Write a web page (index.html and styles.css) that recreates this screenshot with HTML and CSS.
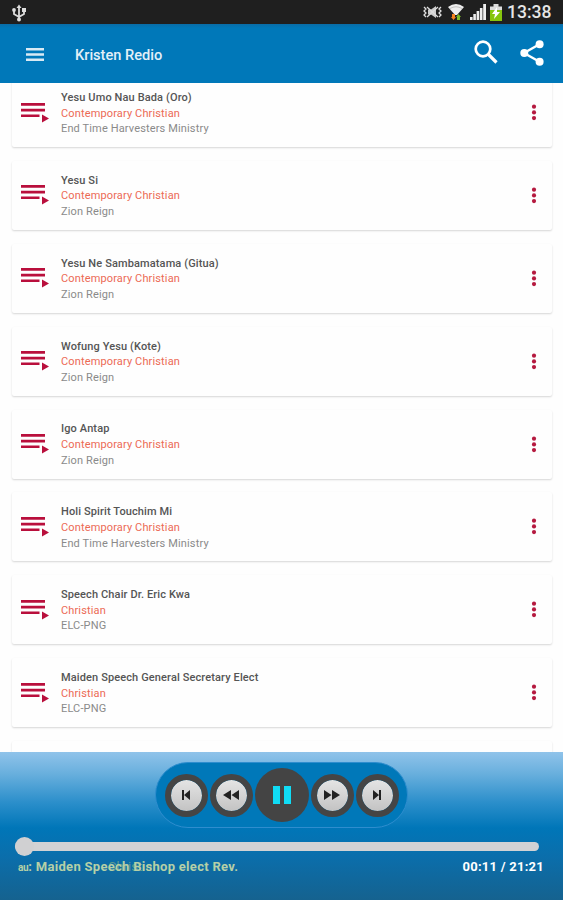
FILE: index.html
```
<!DOCTYPE html>
<html lang="en">

<head>
	<meta charset="utf-8">
	<title>Kristen Redio</title>
	<meta name="viewport" content="width=device-width, initial-scale=1.0">
	<link rel="stylesheet" href="styles.css">
</head>

<body>
	<div class="status-bar">
		<svg class="usb" width="14" height="18" viewBox="0 0 14 18" fill="none" stroke="#ddd" stroke-width="1.8">
			<path d="M7 2v14M2 7v3l5 3 5-3V6" />
			<path d="M4.500 4L7 .5 9.500 4z" fill="#ddd" stroke="none" />
			<circle cx="2" cy="6" r="1.900" fill="#ddd" stroke="none" />
			<path d="M10 4h4v4h-4z" fill="#ddd" stroke="none" />
			<circle cx="7" cy="15.500" r="2" fill="#ddd" stroke="none" />
		</svg>
		<div class="status-icons">
			<svg width="19" height="14" viewBox="0 0 19 14" fill="none" stroke="#ddd" stroke-width="1.300">
				<path d="M1 2l2 2-2 2 2 2-2 2 2 2M18 2l-2 2 2 2-2 2 2 2-2 2" />
				<path d="M5 4.500h3L13 1v12L8 9.500H5z" fill="#ccc" stroke="none" />
				<path d="M4 2l11 10M4 12L15 2" />
			</svg>
			<svg width="16" height="18" viewBox="0 0 16 18">
				<path d="M0 4Q8-2 16 4L9 12H7z" fill="#eee" />
				<path d="M2 5.500Q8 2 14 5.500" fill="none" stroke="#aaa" stroke-width=".7" />
				<path d="M4 11h3v3h1l-2.500 3L3 14h1z" fill="#f5821f" />
				<path d="M9 17h3v-3h1l-2.500-3L8 14h1z" fill="#7dbb25" />
			</svg>
			<svg width="16" height="16" viewBox="0 0 16 16" fill="#eee">
				<path d="M0 13h2.600v3H0zM3.300 10h2.600v6H3.300zM6.600 7h2.600v9H6.600zM9.900 4h2.600v12H9.900zM13.200 0H16v16h-2.800z" />
			</svg>
			<svg width="12" height="17" viewBox="0 0 12 17">
				<path d="M3.500 0h5v2.500H12V17H0V2.500h3.500z" fill="#ddd" />
				<path d="M0 6h12v11H0z" fill="#86c50d" />
				<path d="M7 3L2 10h3l-1 5 6-7H7z" fill="#fff" />
			</svg>
			<span class="clock">13:38</span>
		</div>
	</div>

	<div class="toolbar">
		<svg class="menu" width="18" height="13" viewBox="0 0 18 13" fill="#fff">
			<path d="M0 0h18v2.600H0zM0 5.200h18v2.600H0zM0 10.400h18V13H0z" />
		</svg>
		<h1>Kristen Redio</h1>
		<svg class="search" width="24" height="24" viewBox="0 0 24 24" fill="none" stroke="#fff" stroke-width="2.700">
			<circle cx="9" cy="9" r="7.300" />
			<path d="M14 14l8.500 8.500" stroke-width="3.200" />
		</svg>
		<svg class="share" width="24" height="26" viewBox="0 0 24 26" fill="#fff">
			<path d="M19.500 4.300L4 13l15.500 8.700" fill="none" stroke="#fff" stroke-width="2.400" />
			<circle cx="19.600" cy="4.300" r="4" />
			<circle cx="4.300" cy="13" r="4" />
			<circle cx="19.600" cy="21.700" r="4" />
		</svg>
	</div>

	<div id="tracks" class="tracks"></div>

	<div class="player">
		<div class="controls">
			<button class="btn" aria-label="Previous">
				<svg width="10" height="10" viewBox="0 0 10 10"><path d="M1 0h2v10H1zM9 0v10L3 5z" /></svg>
			</button>
			<button class="btn" aria-label="Rewind">
				<svg width="16" height="10" viewBox="0 0 16 10"><path d="M8 0v10L0 5zM16 0v10L8.500 5z" /></svg>
			</button>
			<button class="btn-pause" aria-label="Pause">
				<svg width="18" height="18" viewBox="0 0 18 18" fill="#10dcf5"><path d="M0 0h7v18H0zM11 0h7v18h-7z" /></svg>
			</button>
			<button class="btn" aria-label="Forward">
				<svg width="16" height="10" viewBox="0 0 16 10"><path d="M0 0v10l7.500-5zM8 0v10l8-5z" /></svg>
			</button>
			<button class="btn" aria-label="Next">
				<svg width="10" height="10" viewBox="0 0 10 10"><path d="M7 0h2v10H7zM1 0v10l6-5z" /></svg>
			</button>
		</div>
		<div class="seek">
			<div class="thumb"></div>
		</div>
		<div class="info">
			<div class="now">
				<span class="now-tag">Christian</span>
				<span class="now-lead">au</span><span class="now-title">: Maiden Speech Bishop elect Rev.</span>
			</div>
			<span class="time">00:11 / 21:21</span>
		</div>
	</div>

	<script src="script.js"></script>
</body>

</html>
```

FILE: styles.css
```
* {
	box-sizing: border-box;
}

body {
	margin: 0;
	width: 563px;
	height: 900px;
	display: flex;
	flex-direction: column;
	overflow: hidden;
	background: #fefefe;
	font-family: Roboto, sans-serif;
}

svg {
	display: block;
	flex: none;
}

.status-bar {
	height: 24px;
	flex: none;
	display: flex;
	align-items: center;
	justify-content: space-between;
	padding: 0 12px;
	background: #1f1f1f;
}

.usb {
	margin-top: 1px;
}

.status-icons {
	display: flex;
	align-items: center;
	gap: 6px;
}

.status-icons svg:nth-child(4) {
	margin-left: -2px;
}

.clock {
	color: #e6e6e6;
	font-size: 17.5px;
	font-weight: 500;
	line-height: 24px;
	width: 44px;
	margin-left: -1px;
	white-space: nowrap;
}

.toolbar {
	height: 59px;
	flex: none;
	display: flex;
	align-items: center;
	padding: 0 19px 0 26px;
	background: linear-gradient(#0a6ca6, #0078b9 4px);
}

.menu {
	opacity: 0.85;
	margin-top: 1px;
}

h1 {
	flex: 1;
	margin: 2px 0 0 31px;
	color: #e3f0f8;
	font-size: 14.6px;
	font-weight: 500;
	line-height: 20px;
}

.search {
	margin: 0 22px 3px 0;
}

.share {
	margin-bottom: 1px;
}

.tracks {
	flex: none;
	height: 669px;
	overflow: hidden;
	padding: 0 11px 0 12px;
}

.track {
	height: 69px;
	margin-bottom: 13.9px;
	display: flex;
	align-items: center;
	padding: 0 15px 0 9px;
	border-radius: 2px;
	background: #fefefe;
	box-shadow: 0 1px 2px rgba(0, 0, 0, 0.16);
}

.track:first-child {
	margin-top: -5px;
}

.track-text {
	flex: 1;
	margin-left: 12px;
	padding-top: 1.6px;
	font-size: 11px;
	line-height: 15.6px;
	letter-spacing: 0.14px;
	color: #8a8a8a;
}

.track-text p {
	margin: 0;
	white-space: nowrap;
}

.track-text .title {
	color: #555;
	font-weight: 500;
	letter-spacing: 0.12px;
}

.track-text .genre {
	color: #ec6a55;
}

.player {
	height: 148px;
	flex: none;
	display: flex;
	flex-direction: column;
	align-items: center;
	padding-top: 10px;
	background: linear-gradient(#90c3ea 0, #68afdd 22px, #2c8fcb 50px, #0076b8 76px, #0b6eab 105px, #15628f 148px);
}

.controls {
	width: 253px;
	height: 66px;
	flex: none;
	display: flex;
	align-items: center;
	justify-content: center;
	gap: 2px;
	border: 1px solid #2e8dce;
	border-radius: 33px;
	background: #0078b9;
}

button {
	display: flex;
	align-items: center;
	justify-content: center;
	padding: 0;
	border-radius: 50%;
}

.btn {
	width: 43px;
	height: 43px;
	border: 6px solid #454545;
	background: linear-gradient(#e4e4e4, #c3c3c3);
	background-clip: padding-box;
	fill: #222;
}

.btn-pause {
	width: 54px;
	height: 54px;
	border: 0;
	background: #444;
}

.seek {
	width: 524px;
	height: 9px;
	flex: none;
	display: flex;
	align-items: center;
	margin: 14px 0 0 -10px;
	border-radius: 5px;
	background: #d2d2d4;
}

.thumb {
	width: 19px;
	height: 19px;
	flex: none;
	border-radius: 50%;
	background: #d0d0d2;
}

.info {
	width: 100%;
	display: flex;
	justify-content: space-between;
	padding: 7px 19px 0 18px;
	font-size: 13px;
	font-weight: 700;
	line-height: 17px;
}

.now {
	position: relative;
	color: #b5d0a7;
	white-space: nowrap;
}

.now-tag {
	position: absolute;
	left: 90px;
	top: 0;
	font-weight: 400;
	color: #7fb08a;
	opacity: 0.7;
}

.now-lead {
	font-size: 10px;
	letter-spacing: -0.3px;
}

.now-title {
	position: relative;
	letter-spacing: 0.29px;
}

.time {
	color: #fff;
	letter-spacing: 0.25px;
}
```

FILE: script.js
```
const tracks = [
	['Yesu Umo Nau Bada (Oro)', 'Contemporary Christian', 'End Time Harvesters Ministry'],
	['Yesu Si', 'Contemporary Christian', 'Zion Reign'],
	['Yesu Ne Sambamatama (Gitua)', 'Contemporary Christian', 'Zion Reign'],
	['Wofung Yesu (Kote)', 'Contemporary Christian', 'Zion Reign'],
	['Igo Antap', 'Contemporary Christian', 'Zion Reign'],
	['Holi Spirit Touchim Mi', 'Contemporary Christian', 'End Time Harvesters Ministry'],
	['Speech Chair Dr. Eric Kwa', 'Christian', 'ELC-PNG'],
	['Maiden Speech General Secretary Elect', 'Christian', 'ELC-PNG'],
	['', '', '']
];

const list = document.getElementById('tracks');

tracks.forEach(([title, genre, artist]) => {
	list.innerHTML += `
		<div class="track">
			<svg width="28" height="20" viewBox="0 0 28 20" fill="#b90f3c">
				<path d="M0 0h24v2.700H0zM0 5.700h24v2.700H0zM0 11.400h18.500v2.700H0zM21 11.500v8l7-4z" />
			</svg>
			<div class="track-text">
				<p class="title">${title}</p>
				<p class="genre">${genre}</p>
				<p>${artist}</p>
			</div>
			<svg width="6" height="17" viewBox="0 0 6 17" fill="#b5193f">
				<circle cx="3" cy="2.700" r="2.100" />
				<circle cx="3" cy="8.400" r="2.100" />
				<circle cx="3" cy="14.100" r="2.100" />
			</svg>
		</div>`;
});
```
